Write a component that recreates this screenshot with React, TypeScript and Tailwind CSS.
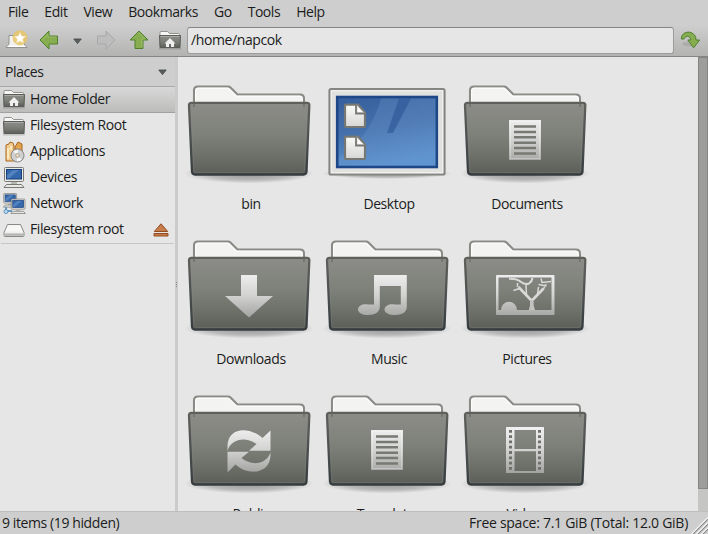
import React from 'react';

type IconProps = { className?: string };

function Gradients() {
  return (
    <svg width="0" height="0" className="absolute" aria-hidden="true">
      <defs>
        <linearGradient id="front" x1="0" y1="0" x2="0" y2="1">
          <stop offset="0" stopColor="#8c8d88" />
          <stop offset="0.45" stopColor="#7e807a" />
          <stop offset="0.75" stopColor="#6d6f69" />
          <stop offset="1" stopColor="#5b5d58" />
        </linearGradient>
        <linearGradient id="edge" x1="0" y1="0" x2="0" y2="1">
          <stop offset="0" stopColor="#5f605c" />
          <stop offset="0.5" stopColor="#4c5050" />
          <stop offset="1" stopColor="#363c3f" />
        </linearGradient>
        <linearGradient id="glyph" gradientUnits="userSpaceOnUse" x1="0" y1="43" x2="0" y2="88">
          <stop offset="0" stopColor="#f0f0f0" />
          <stop offset="0.5" stopColor="#d2d2d1" />
          <stop offset="1" stopColor="#a2a3a0" />
        </linearGradient>
        <linearGradient id="sheen" x1="0" y1="0" x2="1" y2="0">
          <stop offset="0" stopColor="#8e8f8c" />
          <stop offset="0.45" stopColor="#bcbcba" />
          <stop offset="1" stopColor="#858682" />
        </linearGradient>
        <linearGradient id="paper" x1="0" y1="0" x2="0" y2="1">
          <stop offset="0" stopColor="#fafaf9" />
          <stop offset="1" stopColor="#d6d6d5" />
        </linearGradient>
        <linearGradient id="sky" x1="0" y1="0" x2="0.25" y2="1">
          <stop offset="0" stopColor="#355f9c" />
          <stop offset="0.5" stopColor="#4470ab" />
          <stop offset="1" stopColor="#5990cd" />
        </linearGradient>
        <radialGradient id="shade">
          <stop offset="0" stopColor="#000" stopOpacity="0.36" />
          <stop offset="0.65" stopColor="#000" stopOpacity="0.2" />
          <stop offset="1" stopColor="#000" stopOpacity="0" />
        </radialGradient>
      </defs>
    </svg>
  );
}

function Folder({ children }: { children?: React.ReactNode }) {
  return (
    <svg width="138" height="116" viewBox="0 0 138 116" className="block">
      <ellipse cx="69" cy="98.500" rx="65" ry="10" fill="url(#shade)" />
      <path d="M14 30V15.300q0-3.800 3.800-3.800H48q1.500 0 2.500 1l7 7H120q4 0 4 4V30z" fill="#f3f3f1" stroke="#8a8b87" strokeWidth="2.100" />
      <path d="M15.700 26.500V16q0-2.800 2.800-2.800H48l8 8H119.500q2.800 0 2.800 3V26.500" fill="none" stroke="#fff" />
      <path d="M11.500 27.800H127q2.500 0 2.300 2.500l-2.800 66.200q-.2 3-3 3H15q-2.800 0-3-3L9 30.300q0-2.500 2.500-2.500z" fill="url(#front)" stroke="url(#edge)" strokeWidth="2.300" />
      <path d="M14 27v5M124 27v5" stroke="#60625e" strokeOpacity=".5" strokeWidth="2" />
      <path d="M11 30H127" stroke="url(#sheen)" strokeWidth="1.600" />
      <path d="M11.200 32l2.600 63q.1 2.500 2.500 2.500H122q2.300 0 2.500-2.500L127 32" fill="none" stroke="#8d8e8a" strokeOpacity="0.250" />
      {children}
    </svg>
  );
}

function DocumentGlyph() {
  return (
    <g>
      <path d="M53 45H85V85H53z" fill="url(#glyph)" />
      <path d="M54.500 46.500H83.500V83.500H54.500z" fill="none" stroke="#fff" strokeOpacity="0.300" />
      <path d="M58 51.500H80M58 57H80M58 62.300H80M58 67.700H80M58 73H80M58 78.500H80" stroke="#777973" strokeWidth="2.500" />
    </g>
  );
}

function DownloadGlyph() {
  return <path d="M61 45H77V66H93L69 87.500 45 66H61z" fill="url(#glyph)" />;
}

function MusicGlyph() {
  return (
    <path
      d="M56 45H88.800V77C88.800 82 84 85 77 85C71 85 66.500 83 66.500 79.500C66.500 75.500 72 73.500 77 74.500H82.800V56H61.800V77C61.800 82 57 85 50 85C44.500 85 40 83 40 79.500C40 75.500 45 73.500 50 74.500H56z"
      fill="url(#glyph)"
    />
  );
}

function PictureGlyph() {
  return (
    <g>
      <path fillRule="evenodd" d="M41 45H97.500q1 0 1 1V84q0 1-1 1H41q-1 0-1-1V46q0-1 1-1zM42.500 47.500V80H95.500V47.500z" fill="url(#glyph)" />
      <path d="M45 80a8 8.200 0 0 1 16 0z" fill="url(#glyph)" />
      <g fill="none" stroke="#d9d9d8">
        <path d="M75.500 78V70.500L62.500 57M75.500 71L87.500 58.500" strokeWidth="2.700" />
        <path d="M70.500 65L70 55M63.500 58.500l-6 2M61.500 57v-4M81.500 64l1-7M87.500 59l2.500-5M82.500 54.500l8 1.500M85 48.500l1 4 9-1" strokeWidth="1.500" />
        <path d="M53 48.800q8-.5 12 3.200 4 3 8 1.500 3-2 3.500-5.500" strokeWidth="2" />
      </g>
      <path d="M72.800 80q2-5 1.400-10h3.400q-.6 5 1.400 10z" fill="#c2c2c0" />
    </g>
  );
}

function SyncGlyph() {
  return (
    <g fill="url(#glyph)">
      <path d="M47.500 66V60C48.500 43 68 40.500 82.500 53L90.500 45.500V65.800H69L76.500 59C65 51 51 54 47.500 66z" />
      <path d="M90.500 67.500V71C89.500 88.500 69 91.500 55.500 79.500L47.500 87.500V66.800H69L61.500 73C71 81 86 80 90.500 67.500z" />
    </g>
  );
}

function FilmGlyph() {
  const holes = [46.3, 51.6, 56.9, 62.2, 67.5, 72.8, 78.1, 83.4];
  return (
    <g>
      <path fillRule="evenodd" d="M50.500 42H87.500q.5 0 .5.500V87.500q0 .5-.5.5H50.500q-.5 0-.5-.500V42.500q0-.5.500-.5zM58.500 45V64H80V45zM58.500 66.300V86H80V66.300z" fill="url(#glyph)" />
      {holes.map((y) => (
        <path key={y} d={`M53 ${y - 1.4}h3v2.800h-3zM82 ${y - 1.4}h3v2.800h-3z`} fill="#6e706b" />
      ))}
    </g>
  );
}

function DesktopIcon() {
  return (
    <svg width="138" height="116" viewBox="0 0 138 116" className="block">
      <ellipse cx="69" cy="98.500" rx="65" ry="5.500" fill="url(#shade)" />
      <rect x="11.500" y="14" width="115" height="85.500" rx="1.500" fill="#e1e1e0" stroke="#858682" strokeWidth="2.200" />
      <rect x="13.200" y="15.700" width="111.600" height="82" fill="none" stroke="#f4f4f3" />
      <rect x="19.200" y="22" width="99.600" height="70" fill="url(#sky)" stroke="#1e4788" strokeWidth="2.600" />
      <path d="M63 23.500H117.500V90.500H21V82Q52 63 63 23.500z" fill="#76a0d4" fillOpacity="0.250" />
      <path d="M81 23.500H93L75 58H69z" fill="#2c5797" fillOpacity="0.650" />
      {[29.5, 61.5].map((y) => (
        <g key={y} transform={`translate(27 ${y})`}>
          <path d="M0 1q0-.8.800-.8H13l7 8V21.500q0 1-1 1H1q-1 0-1-1z" fill="url(#paper)" stroke="#777873" strokeWidth="2.200" />
          <path d="M11 0V9H20" fill="#e8e8e7" stroke="#777873" strokeWidth="1.800" />
          <path d="M13 3v4.500h4.500z" fill="#fff" />
        </g>
      ))}
    </svg>
  );
}

function SmallFolder({ home, className }: { home?: boolean; className?: string }) {
  return (
    <svg width="24" height="20" viewBox="0 0 24 20" className={className}>
      <path d="M1 18.500h22" stroke="#000" strokeOpacity=".15" strokeWidth="2" />
      <path d="M2 8V2.500q0-1 1-1h6.500l2 2h9q1 0 1 1V8" fill="#f7f7f6" stroke="#92938f" />
      <path d="M1.500 5.500h21l-.5 12h-20z" fill="url(#front)" stroke="#5a5d58" />
      <path d="M2.500 6.500h19" stroke="#a9aaa7" />
      {home && <path d="M12 8l5.500 5.500H16v3.500h-3v-3h-2v3H8v-3.500H6.500z" fill="#efefef" />}
    </svg>
  );
}

function AppsIcon() {
  return (
    <svg width="24" height="24" viewBox="0 0 24 24">
      <path d="M4 5l3-1 1-2 3 1 1 3V21H4z" fill="#f0cd8f" stroke="#a86720" />
      <path d="M13 7l3-5 4 2v9h-7z" fill="#e2a44c" stroke="#a86720" />
      <path d="M6 8v11M9 6v4" stroke="#fff1cf" strokeWidth="1.500" />
      <circle cx="15.500" cy="15.500" r="6.500" fill="#d0d0d0" stroke="#858585" />
      <path d="M15.500 15.500l-4.200-4.200a6 6 0 0 1 5-1.600zM15.500 15.500l4.200 4.200a6 6 0 0 1-5 1.600z" fill="#f5f5f5" />
      <circle cx="15.500" cy="15.500" r="1.900" fill="#f5d9b8" stroke="#a5a5a5" />
    </svg>
  );
}

function Monitor() {
  return (
    <g>
      <rect x="2.500" y="1.500" width="19" height="14" rx="1" fill="#e8e8e5" stroke="#777974" />
      <rect x="4.500" y="3.500" width="15" height="9.500" fill="#3468ad" stroke="#173f7c" />
      <path d="M5 9L11 4h6L7 12.500H5z" fill="#6892c9" fillOpacity="0.600" />
      <path d="M9 16h6v2.500H9z" fill="#b7b8b4" />
      <path d="M4.500 18.500h15l2.500 3h-20z" fill="#e8e8e5" stroke="#777974" />
    </g>
  );
}

function DevicesIcon() {
  return (
    <svg width="24" height="24" viewBox="0 0 24 24">
      <Monitor />
    </svg>
  );
}

function NetworkIcon() {
  return (
    <svg width="24" height="24" viewBox="0 0 24 24">
      <g transform="translate(0 .5) scale(.68)">
        <Monitor />
      </g>
      <path d="M4 15v4h6" fill="none" stroke="#679ac1" strokeWidth="2" />
      <circle cx="4" cy="19.500" r="2" fill="#b9dcf3" stroke="#5a91bb" />
      <g transform="translate(7.500 6) scale(.72)">
        <Monitor />
      </g>
    </svg>
  );
}

function DriveIcon() {
  return (
    <svg width="24" height="24" viewBox="0 0 24 24">
      <path d="M5.500 6.500h13l3.500 8v3q0 1-1 1H3q-1 0-1-1v-3z" fill="#eeeeed" stroke="#8a8b87" />
      <path d="M2.500 15.500h19v2.300h-19z" fill="#b4b5b2" />
      <path d="M6 7.500h12l2.500 6H3.500z" fill="#f7f7f6" />
    </svg>
  );
}

function NewWindowIcon({ className }: IconProps) {
  return (
    <svg width="24" height="20" viewBox="0 0 24 20" className={className}>
      <path d="M4 5.500h15V14l3 3.500H1L4 14z" fill="#f2f2f1" stroke="#929390" />
      <path d="M2.500 16.500h18" stroke="#fff" />
      <circle cx="15" cy="7.700" r="7.500" fill="#e7c567" fillOpacity="0.850" />
      <path d="M15 2.400l1.600 3.500 3.900.5-2.900 2.600.8 3.800-3.400-1.900-3.400 1.900.8-3.800-2.900-2.600 3.900-.5z" fill="#fff" stroke="#f5e6b2" strokeWidth=".6" />
    </svg>
  );
}

function Arrow({ dir, muted, className }: { dir: 'left' | 'right' | 'up'; muted?: boolean; className?: string }) {
  const turn = dir === 'left' ? 0 : dir === 'right' ? 180 : 90;
  return (
    <svg width="20" height="20" viewBox="0 0 20 20" className={className}>
      <g transform={`rotate(${turn} 10 10)`}>
        <path d="M1 10L10 1V6h8.500v8H10v5z" fill={muted ? '#bdbdbd' : '#87ad50'} stroke={muted ? '#a8a8a8' : '#4e812b'} strokeLinejoin="round" />
        {!muted && <path d="M3 10l6-5.700V7h8.500" fill="none" stroke="#a8c97a" strokeWidth=".6" />}
      </g>
    </svg>
  );
}

function JumpIcon({ className }: IconProps) {
  return (
    <svg width="22" height="20" viewBox="0 0 22 20" className={className}>
      <ellipse cx="9" cy="14" rx="7" ry="2.500" fill="#999" fillOpacity=".45" />
      <path d="M1.300 9C1.500 3 7 1 11.500 2.700q4.500 2.200 4.500 7.300h3.700L13.600 17.800 7.800 10h3C10 5.500 6 5 4 9z" fill="#87ad50" stroke="#4e812b" strokeLinejoin="round" />
    </svg>
  );
}

function Caret({ className }: IconProps) {
  return (
    <svg width="9" height="7" viewBox="0 0 9 7" className={className}>
      <path d="M.8 1h7.400L4.500 5.600z" fill="#5c5f60" stroke="#3f4344" strokeWidth=".8" />
    </svg>
  );
}

function EjectIcon() {
  return (
    <svg width="16" height="14" viewBox="0 0 16 14" className="block">
      <path d="M8 .8L14.700 8.500H1.300zM1 10.500h14V13H1z" fill="#c77c4b" stroke="#924c20" />
    </svg>
  );
}

const menu = ['File', 'Edit', 'View', 'Bookmarks', 'Go', 'Tools', 'Help'];

const places: { name: string; icon: React.ReactNode }[] = [
  { name: 'Home Folder', icon: <SmallFolder home /> },
  { name: 'Filesystem Root', icon: <SmallFolder /> },
  { name: 'Applications', icon: <AppsIcon /> },
  { name: 'Devices', icon: <DevicesIcon /> },
  { name: 'Network', icon: <NetworkIcon /> },
  { name: 'Filesystem root', icon: <DriveIcon /> },
];

const files: { name: string; icon: React.ReactNode }[] = [
  { name: 'bin', icon: <Folder /> },
  { name: 'Desktop', icon: <DesktopIcon /> },
  { name: 'Documents', icon: <Folder><DocumentGlyph /></Folder> },
  { name: 'Downloads', icon: <Folder><DownloadGlyph /></Folder> },
  { name: 'Music', icon: <Folder><MusicGlyph /></Folder> },
  { name: 'Pictures', icon: <Folder><PictureGlyph /></Folder> },
  { name: 'Public', icon: <Folder><SyncGlyph /></Folder> },
  { name: 'Templates', icon: <Folder><DocumentGlyph /></Folder> },
  { name: 'Videos', icon: <Folder><FilmGlyph /></Folder> },
];

export default function App() {
  return (
    <div className="flex h-[534px] w-[708px] flex-col overflow-hidden bg-[#cecece] font-['Open_Sans','Noto_Sans',sans-serif] text-[14px] leading-[18px] tracking-[-0.4px] whitespace-nowrap text-[#1b1c20]">
      <Gradients />
      <nav className="flex h-[25px] shrink-0 gap-4 pt-[3px] pl-2 tracking-[-0.45px]">
        {menu.map((m) => (
          <span key={m}>{m}</span>
        ))}
      </nav>
      <div className="flex h-8 shrink-0 items-center border-b border-[#858683] bg-linear-to-b from-[#cecece] to-[#b3b4b2] pb-px">
        <NewWindowIcon className="ml-[5px]" />
        <Arrow dir="left" className="ml-2.5" />
        <Caret className="mt-[3px] ml-[14px]" />
        <Arrow dir="right" muted className="ml-[14px]" />
        <Arrow dir="up" className="ml-[13px]" />
        <SmallFolder home className="ml-[9px]" />
        <div className="ml-[5px] flex h-[27px] w-[487px] items-center rounded-[3px] border border-[#9c9d9a] border-t-[#858683] bg-[#e6e6e6] pl-[3px]">
          /home/napcok
        </div>
        <JumpIcon className="ml-[6px]" />
      </div>
      <div className="flex h-[454px] shrink-0">
        <aside className="flex w-[175px] flex-col bg-[#e6e6e6]">
          <div className="flex h-[29.500px] items-center justify-between border-b border-[#a9aaa8] bg-[#cecece] pt-0.5 pr-2 pl-[5px]">
            <span>Places</span>
            <Caret />
          </div>
          {places.map((p, i) => (
            <div
              key={p.name}
              className={
                i === 0
                  ? 'flex h-[26px] items-center border-b border-[#a1a2a0] bg-linear-to-b from-[#d8d8d8] to-[#bcbdbb] pl-0.5'
                  : 'flex h-[26px] items-center pr-[6px] pl-0.5'
              }
            >
              <span className="w-7">{p.icon}</span>
              <span className="-mt-px">{p.name}</span>
              {i === 5 && (
                <span className="ml-auto">
                  <EjectIcon />
                </span>
              )}
            </div>
          ))}
          <div className="mx-px mt-[.5px] h-px bg-[#c6c6c6]" />
        </aside>
        <div className="flex w-[3px] flex-col items-center justify-center gap-px bg-[#cbcbcb]">
          <i className="size-px bg-[#858585]" />
          <i className="size-px bg-[#858585]" />
          <i className="size-px bg-[#858585]" />
        </div>
        <main className="w-[520px] overflow-hidden bg-[#e6e6e6] pt-[18px] pl-0.5">
          <div className="grid auto-rows-[155px] grid-cols-[138px_138px_138px]">
            {files.map((f) => (
              <div key={f.name} className="flex flex-col items-center">
                {f.icon}
                <span className="mt-1 pl-1">{f.name}</span>
              </div>
            ))}
          </div>
        </main>
        <div className="w-2.5 bg-[#c5c5c4]">
          <div className="h-[432px] border border-[#858683] bg-[#9d9e9b]" />
        </div>
      </div>
      <footer className="flex h-[23px] shrink-0 items-start justify-between border-t border-[#bebebe] pt-[2px] pl-[2px]">
        <span>9 items (19 hidden)</span>
        <div className="flex">
          <span className="tracking-[-0.27px]">Free space: 7.1 GiB (Total: 12.0 GiB)</span>
          <svg width="19" height="20" viewBox="0 0 19 20" className="ml-px">
            <path d="M4 20L19 5M9 20L19 10M14 20l5-5" stroke="#858585" strokeWidth="1.200" />
            <path d="M2.500 20L19 3.500M7.500 20L19 8.500M12.500 20L19 13.500" stroke="#f5f5f5" strokeWidth="1.200" />
          </svg>
        </div>
      </footer>
    </div>
  );
}
